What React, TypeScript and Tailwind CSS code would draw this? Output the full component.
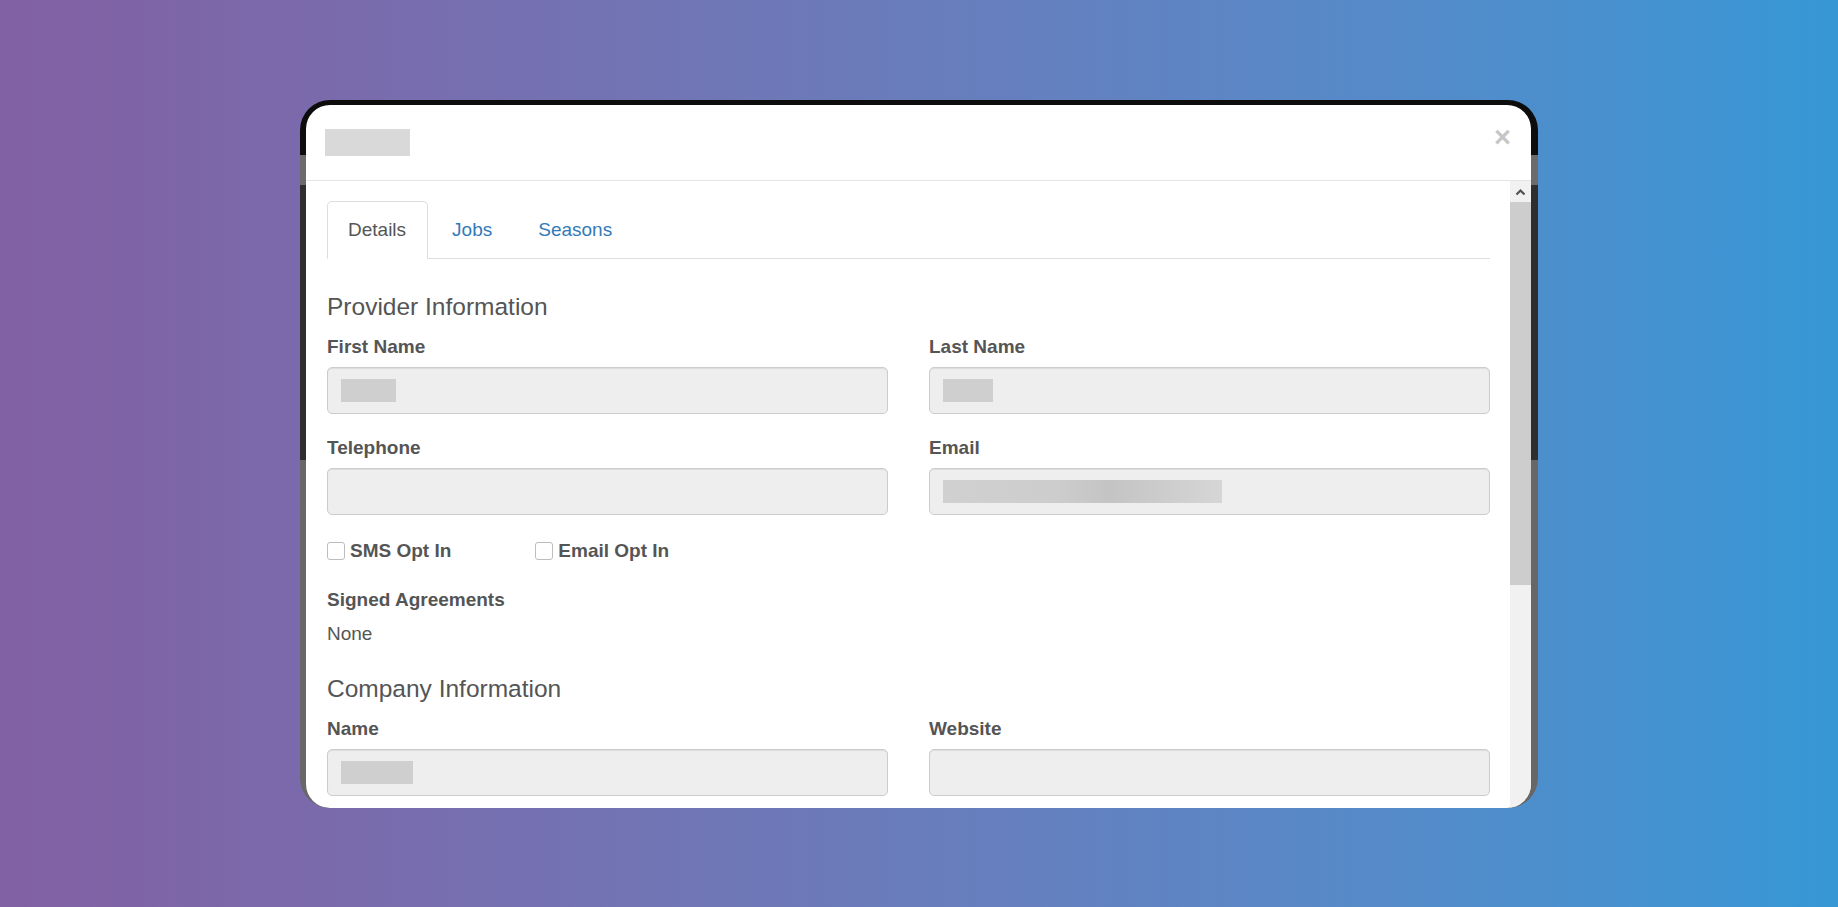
import React from 'react';

const font = { fontFamily: '"Liberation Sans", Arial, Helvetica, sans-serif' };

function Field({ label, blur }: { label: string; blur?: React.ReactNode }) {
  return (
    <div className="mb-[20px]">
      <label className="block text-[19px] leading-[27px] font-bold text-[#555] mb-[7px]">{label}</label>
      <div className="h-[47px] rounded-[5px] border border-[#cccccc] bg-[#eeeeee] shadow-[inset_0_1px_1px_rgba(0,0,0,0.075)] flex items-center pl-[13px]">
        {blur}
      </div>
    </div>
  );
}

function Blur({ w }: { w: string }) {
  return <div className={`h-[23px] bg-[#cfcfcf] ${w}`} />;
}

function Check({ label }: { label: string }) {
  return (
    <label className="flex items-center gap-[5px]">
      <span className="w-[18px] h-[18px] rounded-[3px] border border-[#bdbdbd] bg-white" />
      <span className="text-[19px] leading-[27px] font-bold text-[#555]">{label}</span>
    </label>
  );
}

export default function App() {
  return (
    <div
      className="w-full h-[907px] bg-gradient-to-r from-[#8160a3] to-[#3597d5] flex justify-center pt-[100px]"
      style={font}
    >
      {/* Screenshot frame */}
      <div className="w-[1238px] h-[708px] rounded-[30px] overflow-hidden pt-[5px] pl-[6px] pr-[7px] flex bg-[linear-gradient(to_bottom,#0d0d0d_0px,#0d0d0d_55px,#6b6b6b_55px,#6b6b6b_85px,#2e2e2e_85px,#2e2e2e_360px,#676767_360px)]">
        {/* Modal */}
        <div className="flex-1 bg-white rounded-[24px] overflow-hidden flex flex-col">
          {/* Header */}
          <div className="h-[76px] shrink-0 border-b border-[#e5e5e5] pl-[19px] pr-[20px] flex items-center justify-between">
            <div className="w-[85px] h-[27px] bg-[#d9d9d9]" />
            <span className="text-[29px] leading-[28px] font-bold text-[#c6c6c6] -mt-[12px]">×</span>
          </div>

          {/* Body */}
          <div className="flex-1 flex min-h-0">
            <div className="flex-1 pl-[21px] pr-[20px] pt-[20px] overflow-hidden">
              {/* Tabs */}
              <ul className="flex border-b border-[#dddddd]">
                <li className="-mb-px mr-[3px]">
                  <span className="flex items-center h-[58px] pl-[20px] pr-[21px] border border-[#dddddd] border-b-white rounded-t-[5px] bg-white text-[19px] text-[#555]">
                    Details
                  </span>
                </li>
                <li className="-mb-px mr-[3px]">
                  <span className="flex items-center h-[58px] pl-[21px] pr-[22px] text-[19px] text-[#337ab7]">Jobs</span>
                </li>
                <li className="-mb-px">
                  <span className="flex items-center h-[58px] px-[21px] text-[19px] text-[#337ab7]">Seasons</span>
                </li>
              </ul>

              {/* Provider Information */}
              <h4 className="mt-[34px] mb-[13px] text-[24.5px] leading-[27px] text-[#555]">Provider Information</h4>
              <div className="grid grid-cols-2 gap-x-[41px]">
                <Field label="First Name" blur={<Blur w="w-[55px]" />} />
                <Field label="Last Name" blur={<Blur w="w-[50px]" />} />
                <Field label="Telephone" />
                <Field
                  label="Email"
                  blur={
                    <div className="h-[23px] w-[279px] bg-[linear-gradient(to_right,#d0d0d0,#cdcdcd_40%,#c4c4c4_60%,#d6d6d6)]" />
                  }
                />
              </div>

              <div className="flex items-center gap-[84px] -mt-[20px] pt-[22px] h-[49px]">
                <Check label="SMS Opt In" />
                <Check label="Email Opt In" />
              </div>

              <div className="mt-[22px] text-[19px] leading-[27px] font-bold text-[#555] mb-[7px]">Signed Agreements</div>
              <p className="text-[19px] leading-[27px] text-[#555]">None</p>

              {/* Company Information */}
              <h4 className="mt-[28px] mb-[13px] text-[24.5px] leading-[27px] text-[#555]">Company Information</h4>
              <div className="grid grid-cols-2 gap-x-[41px]">
                <Field label="Name" blur={<Blur w="w-[72px]" />} />
                <Field label="Website" />
              </div>
            </div>

            {/* Scrollbar */}
            <div className="w-[21px] shrink-0 bg-[#f1f1f1] flex flex-col">
              <div className="h-[21px] flex items-center justify-center">
                <svg width="11" height="8" viewBox="0 0 11 8">
                  <polyline points="1.5,6.5 5.5,2.5 9.5,6.5" fill="none" stroke="#505050" strokeWidth="2.2" />
                </svg>
              </div>
              <div className="h-[383px] bg-[#cdcdcd]" />
            </div>
          </div>
        </div>
      </div>
    </div>
  );
}
